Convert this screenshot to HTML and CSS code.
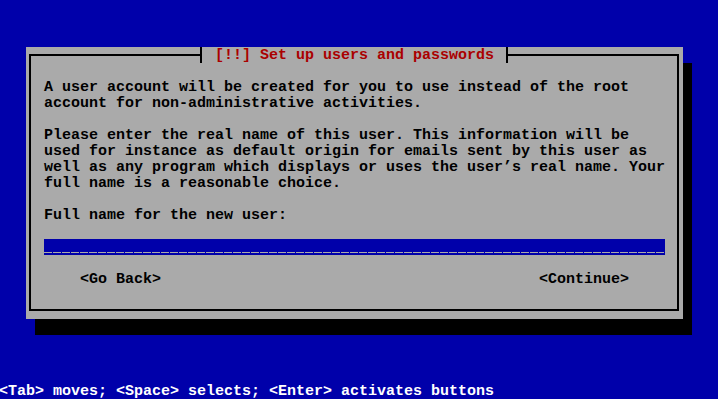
FILE: index.html
```html
<!DOCTYPE html>
<html lang="en">
<head>
<meta charset="utf-8">
<title>Set up users and passwords</title>
<link rel="stylesheet" href="styles.css">
</head>
<body>
<div class="screen">
  <div class="dialog">
    <div class="frame">
      <div class="title">[!!] Set up users and passwords</div>
      <div class="content">
        <p class="text">A user account will be created for you to use instead of the root<br>account for non-administrative activities.</p>
        <p class="text">Please enter the real name of this user. This information will be<br>used for instance as default origin for emails sent by this user as<br>well as any program which displays or uses the user’s real name. Your<br>full name is a reasonable choice.</p>
        <p class="text">Full name for the new user:</p>
        <div class="entry"></div>
        <div class="buttons">
          <span class="button">&lt;Go Back&gt;</span>
          <span class="button">&lt;Continue&gt;</span>
        </div>
      </div>
    </div>
  </div>
  <div class="status">&lt;Tab&gt; moves; &lt;Space&gt; selects; &lt;Enter&gt; activates buttons</div>
</div>
</body>
</html>
```
FILE: styles.css
```css
html, body {
  margin: 0;
  padding: 0;
  background: #0000aa;
}

body {
  font-family: "Liberation Mono", "DejaVu Sans Mono", monospace;
  font-weight: bold;
  font-size: 15px;
  line-height: 16px;
  color: #000;
}

.screen {
  width: 718px;
  height: 399px;
  overflow: hidden;
  display: flex;
  flex-direction: column;
}

.dialog {
  box-sizing: border-box;
  margin: 47px 0 0 26px;
  width: 657px;
  height: 272px;
  padding: 7px 4px 8px 3px;
  background: #aaaaaa;
  box-shadow: 9px 16px 0 #000;
}

.frame {
  box-sizing: border-box;
  height: 100%;
  border: 2px solid #000;
  position: relative;
}

.title {
  position: absolute;
  top: -9px;
  left: 169px;
  box-sizing: border-box;
  width: 308px;
  height: 16px;
  padding: 1px 12px 0 13px;
  border-left: 2px solid #000;
  border-right: 2px solid #000;
  background: #aaaaaa;
  color: #aa0000;
  white-space: pre;
}

.content {
  padding: 23px 0 0 13px;
}

.text {
  margin: 0 0 15px 0;
  padding-top: 1px;
  white-space: nowrap;
}

.entry {
  width: 621px;
  height: 16px;
  margin-bottom: 16px;
  background-color: #0000aa;
  background-image: repeating-linear-gradient(to right, #aaaaaa 0, #aaaaaa 8px, transparent 8px, transparent 9px);
  background-size: 100% 1px;
  background-position: 0 13px;
  background-repeat: no-repeat;
}

.buttons {
  box-sizing: border-box;
  width: 621px;
  padding: 1px 36px 0 36px;
  display: flex;
  justify-content: space-between;
  white-space: pre;
}

.status {
  margin-top: auto;
  margin-left: -1px;
  height: 15px;
  padding-top: 1px;
  color: #ffffff;
  white-space: pre;
}
```
